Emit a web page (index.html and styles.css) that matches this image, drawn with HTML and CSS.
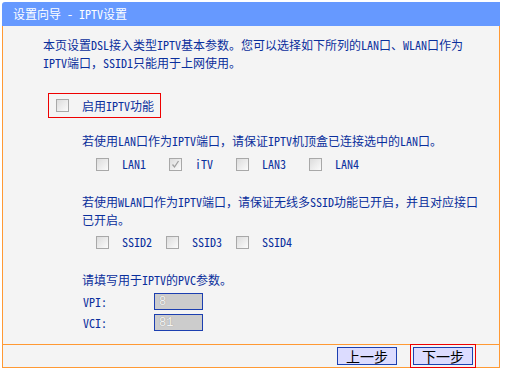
FILE: index.html
```html
<!DOCTYPE html>
<html lang="zh-CN">
<head>
    <meta charset="UTF-8">
    <title>设置向导 - IPTV设置</title>
    <link rel="stylesheet" href="styles.css">
</head>
<body>
    <div class="panel">
        <div class="title">设置向导 - IPTV设置</div>
        <div class="content">
            <p class="intro">本页设置DSL接入类型IPTV基本参数。您可以选择如下所列的LAN口、WLAN口作为IPTV端口，SSID1只能用于上网使用。</p>

            <div class="enableBox">
                <label><input type="checkbox" class="cb"><span>启用IPTV功能</span></label>
            </div>

            <p class="indent lanText">若使用LAN口作为IPTV端口，请保证IPTV机顶盒已连接选中的LAN口。</p>
            <div class="checkRow lanRow">
                <label><input type="checkbox" class="cb" disabled><span>LAN1</span></label>
                <label><input type="checkbox" class="cb" checked disabled><span>iTV</span></label>
                <label><input type="checkbox" class="cb" disabled><span>LAN3</span></label>
                <label><input type="checkbox" class="cb" disabled><span>LAN4</span></label>
            </div>

            <p class="indent wlanText">若使用WLAN口作为IPTV端口，请保证无线多SSID功能已开启，并且对应接口已开启。</p>
            <div class="checkRow ssidRow">
                <label><input type="checkbox" class="cb" disabled><span>SSID2</span></label>
                <label><input type="checkbox" class="cb" disabled><span>SSID3</span></label>
                <label><input type="checkbox" class="cb" disabled><span>SSID4</span></label>
            </div>

            <p class="indent pvcText">请填写用于IPTV的PVC参数。</p>
            <div class="field vpi">
                <span class="fieldName">VPI:</span>
                <input type="text" value="8" disabled>
            </div>
            <div class="field vci">
                <span class="fieldName">VCI:</span>
                <input type="text" value="81" disabled>
            </div>
        </div>
        <div class="footer">
            <button type="button">上一步</button>
            <button type="button" class="current">下一步</button>
        </div>
    </div>
</body>
</html>
```

FILE: styles.css
```css
body {
    margin: 0;
    background-color: #ffffff;
    font-family: "Noto Sans Mono CJK SC", "Noto Sans CJK SC", monospace;
    font-size: 12px;
    line-height: 18px;
    color: #0a2f9c;
}

.panel {
    width: 498px;
    margin: 2px 0 0 2px;
}

.title {
    height: 24px;
    line-height: 24px;
    padding-left: 11px;
    background-color: #6699ff;
    border-top-left-radius: 3px;
    color: #ffffff;
    font-size: 12px;
}

.content {
    height: 318px;
    box-sizing: border-box;
    padding: 10px 15px 0 40px;
    background-color: #f4f4f4;
    border-left: 1px solid #ff9933;
    border-right: 1px solid #ff9933;
}

p {
    margin: 0;
}

.indent {
    margin-left: 39px;
}

.enableBox {
    display: inline-block;
    margin: 21px 0 0 5px;
    padding: 1px 6px 1px 7px;
    border: 1px solid #ee0000;
}

.enableBox label {
    display: flex;
    align-items: center;
    height: 21px;
}

label {
    display: flex;
    align-items: center;
}

.cb {
    appearance: none;
    -webkit-appearance: none;
    width: 13px;
    height: 13px;
    margin: 0 13px 0 0;
    box-sizing: border-box;
    border: 1px solid #a8a8a8;
    background: linear-gradient(135deg, #dcdcdc, #fbfbfb);
}

.cb:checked {
    background-image: url("data:image/svg+xml,%3Csvg xmlns='http://www.w3.org/2000/svg' width='11' height='11'%3E%3Cpath d='M2.5 5.5 L4.5 8 L8.5 2' fill='none' stroke='%23a0a0a0' stroke-width='1.3'/%3E%3C/svg%3E"), linear-gradient(135deg, #dcdcdc, #fbfbfb);
    background-repeat: no-repeat;
}

.lanText {
    margin-top: 14px;
}

.checkRow {
    display: flex;
    height: 18px;
    margin-left: 53px;
    margin-top: 5px;
}

.lanRow {
    gap: 23px;
}

.ssidRow {
    gap: 14px;
    margin-top: 4px;
}

.wlanText {
    margin-top: 20px;
}

.pvcText {
    margin-top: 20px;
}

.field {
    display: flex;
    align-items: center;
    height: 17px;
    margin: 4px 0 0 40px;
}

.fieldName {
    width: 71px;
}

.field input {
    width: 49px;
    height: 17px;
    box-sizing: border-box;
    padding: 0 0 0 4px;
    border: 1px solid #1c3fb0;
    background-color: #cccccc;
    font-family: "Liberation Mono", monospace;
    font-size: 12px;
    color: #f4f4f4;
    text-shadow: 0 0 1px #888888;
    opacity: 1;
}

.field + .field {
    margin-top: 4px;
}

.footer {
    display: flex;
    justify-content: flex-end;
    align-items: center;
    gap: 16px;
    height: 22px;
    padding-right: 26px;
    background-color: #f4f4f4;
    border: 1px solid #ff9933;
}

.footer button {
    width: 60px;
    height: 18px;
    padding: 0;
    border: 1px solid #1c3fb0;
    background-color: #dcdcff;
    font-family: "Noto Sans CJK SC", sans-serif;
    font-size: 14px;
    line-height: 16px;
    color: #000000;
}

.footer button.current {
    outline: 1px solid #ee0000;
    outline-offset: 2px;
}
```
